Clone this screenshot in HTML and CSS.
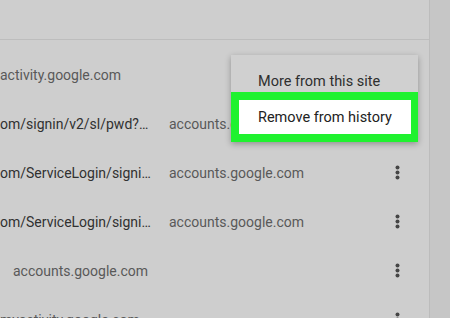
FILE: index.html
```html
<!DOCTYPE html>
<html lang="en">
<head>
    <meta charset="UTF-8">
    <meta name="viewport" content="width=device-width, initial-scale=1.0">
    <title>History</title>
    <link rel="stylesheet" href="styles.css">
</head>
<body>
    <div class="page">
        <div class="main">
            <div class="header"></div>
            <div class="list">
                <div class="row">
                    <span class="title muted">activity.google.com</span>
                </div>
                <div class="row">
                    <span class="title">om/signin/v2/sl/pwd?…</span>
                    <span class="domain">accounts.google.com</span>
                    <span class="more"><svg width="5" height="15" viewBox="0 0 5 15"><circle cx="2.5" cy="2.5" r="2"/><circle cx="2.5" cy="7.5" r="2"/><circle cx="2.5" cy="12.5" r="2"/></svg></span>
                </div>
                <div class="row">
                    <span class="title">om/ServiceLogin/signi…</span>
                    <span class="domain">accounts.google.com</span>
                    <span class="more"><svg width="5" height="15" viewBox="0 0 5 15"><circle cx="2.5" cy="2.5" r="2"/><circle cx="2.5" cy="7.5" r="2"/><circle cx="2.5" cy="12.5" r="2"/></svg></span>
                </div>
                <div class="row">
                    <span class="title">om/ServiceLogin/signi…</span>
                    <span class="domain">accounts.google.com</span>
                    <span class="more"><svg width="5" height="15" viewBox="0 0 5 15"><circle cx="2.5" cy="2.5" r="2"/><circle cx="2.5" cy="7.5" r="2"/><circle cx="2.5" cy="12.5" r="2"/></svg></span>
                </div>
                <div class="row">
                    <span class="title muted indent">accounts.google.com</span>
                    <span class="domain"></span>
                    <span class="more"><svg width="5" height="15" viewBox="0 0 5 15"><circle cx="2.5" cy="2.5" r="2"/><circle cx="2.5" cy="7.5" r="2"/><circle cx="2.5" cy="12.5" r="2"/></svg></span>
                </div>
                <div class="row">
                    <span class="title muted">myactivity.google.com</span>
                    <span class="domain"></span>
                    <span class="more"><svg width="5" height="15" viewBox="0 0 5 15"><circle cx="2.5" cy="2.5" r="2"/><circle cx="2.5" cy="7.5" r="2"/><circle cx="2.5" cy="12.5" r="2"/></svg></span>
                </div>
            </div>
        </div>
        <div class="scrollbar"></div>

        <div class="menu">
            <div class="menu-item first">More from this site</div>
            <div class="menu-item highlight">
                <div class="highlight-box">Remove from history</div>
            </div>
        </div>
    </div>
</body>
</html>
```

FILE: styles.css
```css
body {
    margin: 0;
    padding: 0;
    font-family: Roboto, "Liberation Sans", Arial, sans-serif;
    background-color: #cecece;
}
.page {
    position: relative;
    display: flex;
    width: 450px;
    height: 318px;
    overflow: hidden;
}
.main {
    width: 430px;
}
.header {
    height: 39px;
    border-bottom: 1px solid #bdbdbd;
}
.list {
    padding-top: 10px;
}
.row {
    display: flex;
    align-items: center;
    height: 49px;
    font-size: 14px;
}
.title {
    width: 169px;
    flex-shrink: 0;
    color: #313131;
    white-space: nowrap;
}
.title.indent {
    padding-left: 13px;
    box-sizing: border-box;
}
.muted {
    color: #595959;
}
.domain {
    flex: 1;
    color: #595959;
    white-space: nowrap;
}
.more {
    width: 44px;
    display: flex;
    justify-content: center;
    margin-right: 10px;
}
.more svg {
    fill: #454545;
}
.scrollbar {
    width: 20px;
    background-color: #c6c6c6;
    border-left: 1px solid #bcbcbc;
}
.menu {
    position: absolute;
    left: 231px;
    top: 55px;
    width: 187px;
    background-color: #d0d0d0;
    box-shadow: 0 2px 6px rgba(0, 0, 0, 0.3);
}
.menu-item {
    height: 37px;
    padding-left: 27px;
    display: flex;
    align-items: center;
    font-size: 14.5px;
    color: #2e2e2e;
    box-sizing: border-box;
}
.menu-item.first {
    padding-top: 16px;
}
.menu-item.highlight {
    height: 50px;
    padding: 8px 7px 8px 8px;
    background-color: #1ff22f;
}
.highlight-box {
    flex: 1;
    height: 100%;
    background-color: #fff;
    display: flex;
    align-items: center;
    padding-left: 19px;
    color: #222;
}
```
